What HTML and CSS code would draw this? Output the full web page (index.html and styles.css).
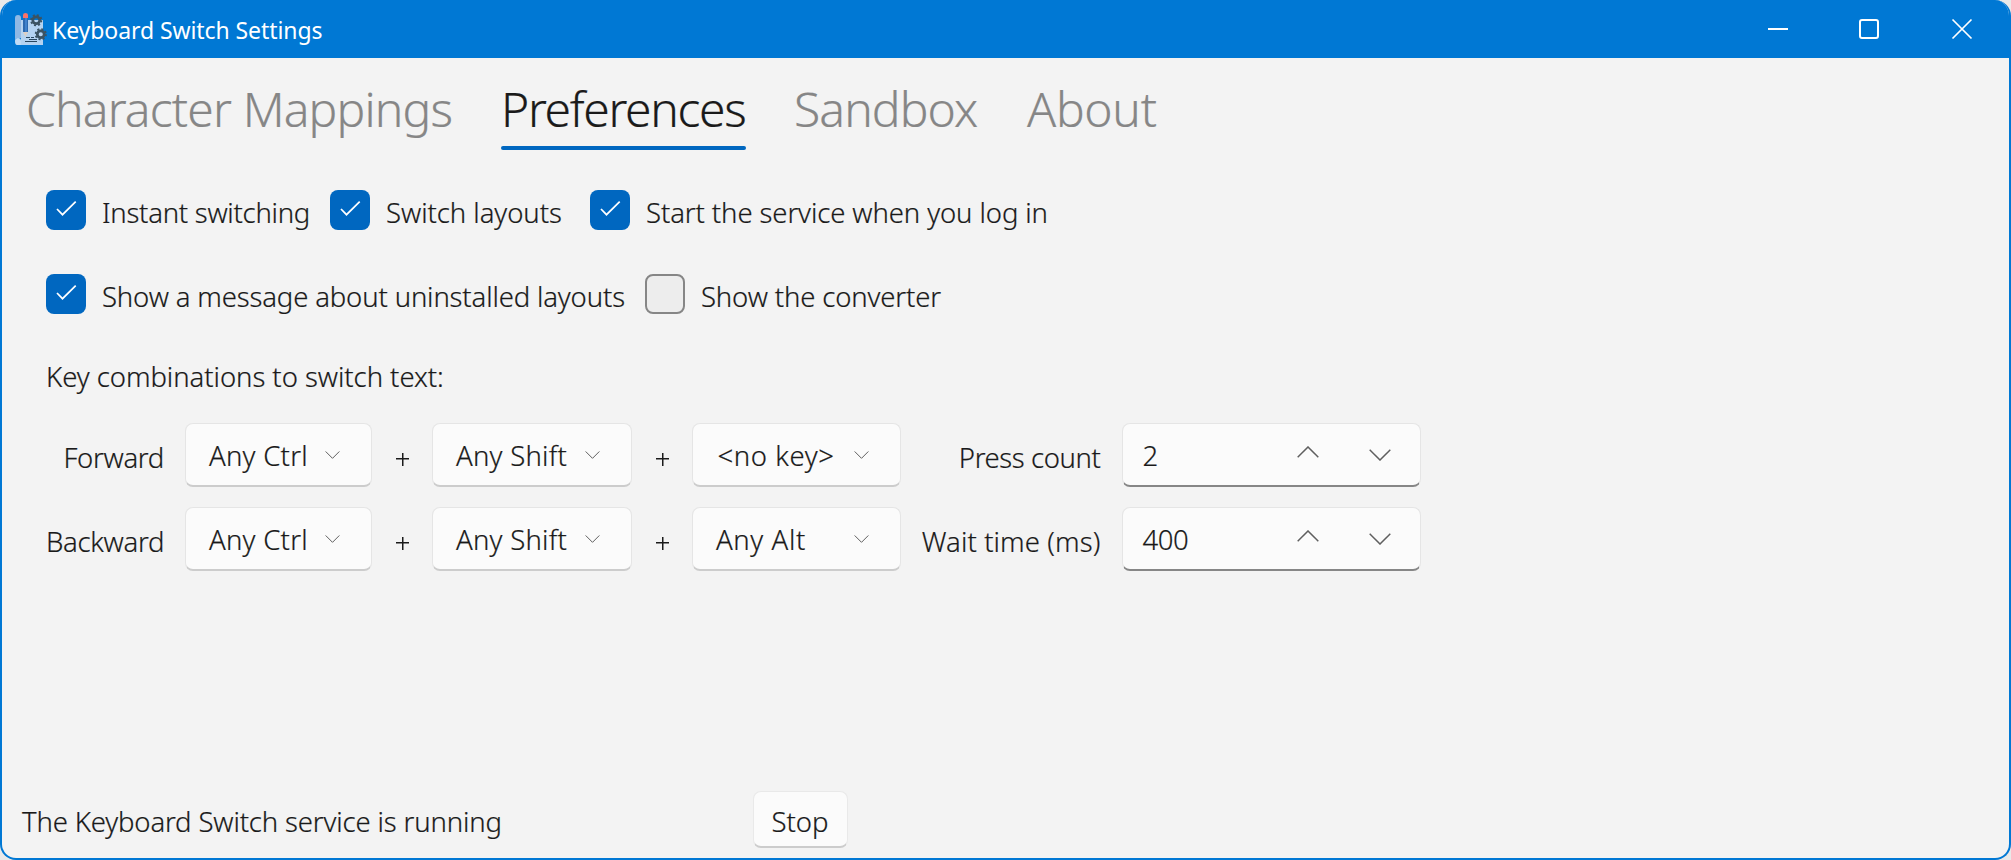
FILE: index.html
```html
<!DOCTYPE html>
<html lang="en">
<head>
<meta charset="utf-8">
<title>Keyboard Switch Settings</title>
<link rel="stylesheet" href="styles.css">
</head>
<body>
<svg width="0" height="0" class="defs">
  <symbol id="tick" viewBox="0 0 40 40"><path d="M11 19l5.500 5.700L29.700 11.700" fill="none" stroke="#fff" stroke-width="1.7"/></symbol>
  <symbol id="down" viewBox="0 0 22 12"><path d="M.7.7L11 11 21.300.7" fill="none" stroke="#5f5f5f" stroke-width="1.5"/></symbol>
  <symbol id="up" viewBox="0 0 22 12"><path d="M.7 11.300L11 1l10.300 10.300" fill="none" stroke="#5f5f5f" stroke-width="1.5"/></symbol>
  <symbol id="gear" viewBox="-6 -6 12 12"><circle r="3.300" fill="none" stroke="#3b5362" stroke-width="2.600"/><circle r="5" fill="none" stroke="#3b5362" stroke-width="1.800" stroke-dasharray="1.960 1.960"/></symbol>
</svg>
<div class="window">
  <header class="titlebar">
    <svg class="app-icon" viewBox="0 0 32 32">
      <path d="M6 7h22v25H6z" fill="#b4d3f1"/>
      <path d="M0 5q0-3 3-3t3 3v20H3q-3 0-3 3z" fill="#8fb8e4"/>
      <path d="M0 28q0-3 3-3t3 3v4H2q-2 0-2-4z" fill="#c0dbf5"/>
      <path d="M8 5h5v14H8z" fill="#2b69b0"/><path d="M10 5h2v14h-2z" fill="#3f82cc"/>
      <path d="M8 19h5l-2.500 5z" fill="#dccfc4"/>
      <path d="M8 5V2q0-2 2.500-2T13 2v3z" fill="#fb7268"/>
      <path d="M11 24.500h4m1 0h3M10 28.500h12M14 26.500h8" stroke="#29475f" stroke-width="1"/>
      <use href="#gear" x="15" y="1" width="12.500" height="12.500"/>
      <use href="#gear" x="19.500" y="15" width="12.500" height="12.500"/>
    </svg>
    <span class="title">Keyboard Switch Settings</span>
    <div class="controls">
      <svg viewBox="0 0 20 20"><path d="M0 10h20" stroke="#fff" stroke-width="2"/></svg>
      <svg viewBox="0 0 20 20"><rect x="1" y="1" width="18" height="18" rx="2" fill="none" stroke="#fff" stroke-width="2"/></svg>
      <svg viewBox="0 0 20 20"><path d="M.5.5l19 19m0-19l-19 19" stroke="#fff" stroke-width="1.700"/></svg>
    </div>
  </header>
  <nav class="tabs">
    <span class="tab t1">Character Mappings</span>
    <span class="tab t2 active">Preferences</span>
    <span class="tab t3">Sandbox</span>
    <span class="tab t4">About</span>
  </nav>
  <main class="page">
    <div class="checks">
      <label class="check c1"><svg class="box on"><use href="#tick"/></svg><span class="s1">Instant switching</span></label>
      <label class="check c2"><svg class="box on"><use href="#tick"/></svg><span class="s2">Switch layouts</span></label>
      <label class="check"><svg class="box on"><use href="#tick"/></svg><span class="s3">Start the service when you log in</span></label>
    </div>
    <div class="checks">
      <label class="check c4"><svg class="box on"><use href="#tick"/></svg><span class="s4">Show a message about uninstalled layouts</span></label>
      <label class="check"><span class="box"></span><span class="s5">Show the converter</span></label>
    </div>
    <p class="caption">Key combinations to switch text:</p>
    <div class="grid">
      <span class="label s6">Forward</span>
      <div class="select"><span class="s8">Any Ctrl</span><svg class="chev"><use href="#down"/></svg></div>
      <span class="plus"></span>
      <div class="select"><span class="s9">Any Shift</span><svg class="chev"><use href="#down"/></svg></div>
      <span class="plus"></span>
      <div class="select"><span class="s10">&lt;no key&gt;</span><svg class="chev"><use href="#down"/></svg></div>
      <span class="label s12">Press count</span>
      <div class="number"><span>2</span><svg class="step"><use href="#up"/></svg><svg class="step dn"><use href="#down"/></svg></div>
      <span class="label s7">Backward</span>
      <div class="select"><span class="s8">Any Ctrl</span><svg class="chev"><use href="#down"/></svg></div>
      <span class="plus"></span>
      <div class="select"><span class="s9">Any Shift</span><svg class="chev"><use href="#down"/></svg></div>
      <span class="plus"></span>
      <div class="select"><span class="s11">Any Alt</span><svg class="chev"><use href="#down"/></svg></div>
      <span class="label s13">Wait time (ms)</span>
      <div class="number"><span class="s14">400</span><svg class="step"><use href="#up"/></svg><svg class="step dn"><use href="#down"/></svg></div>
    </div>
  </main>
  <footer class="status">
    <span class="message">The Keyboard Switch service is running</span>
    <button class="stop">Stop</button>
  </footer>
</div>
</body>
</html>
```
FILE: styles.css
```css
* { box-sizing: border-box; }
body { margin: 0; background: #e9e9e9; font-family: "Noto Sans", "Open Sans", sans-serif; font-size: 27.500px; font-weight: 300; color: #1a1a1a; -webkit-text-stroke: .2px; }
.defs { position: absolute; }
.window { width: 2011px; height: 860px; display: flex; flex-direction: column; border: 2px solid #0078d4; border-top: 0; border-radius: 16px; background: #f3f3f3; overflow: hidden; white-space: nowrap; }
.titlebar { height: 58px; flex: none; display: flex; align-items: center; background: #0078d4; color: #fff; padding-left: 13px; }
.app-icon { width: 32px; height: 32px; flex: none; }
.title { font-size: 23px; font-weight: 400; margin-left: 5px; line-height: 30px; padding-top: 2px; letter-spacing: -.08px; -webkit-text-stroke: 0; }
.controls { margin-left: auto; display: flex; gap: 72px; padding-right: 37px; }
.controls svg { width: 20px; height: 20px; overflow: visible; }
.controls svg:nth-child(2) { margin: 0 1px 0 -1px; }
.tabs { height: 92px; flex: none; display: flex; padding-left: 24px; font-size: 48px; line-height: 66px; color: #868686; }
.tab { height: 92px; padding-top: 18px; margin-right: 48px; }
.t1 { width: 427px; letter-spacing: -.83px; }
.t2 { width: 245px; letter-spacing: -1.330px; }
.t3 { width: 184px; letter-spacing: -.9px; }
.t4 { letter-spacing: -.3px; padding-left: 1px; }
.active { color: #1a1a1a; position: relative; }
.active::after { content: ""; position: absolute; left: 0; right: 0; bottom: 0; height: 4px; border-radius: 2px; background: #0067c0; }
.page { padding: 40px 0 0 44px; flex: 1; }
.checks { display: flex; height: 40px; margin-bottom: 44px; }
.check { display: flex; }
.check > span:last-child { margin-left: 16px; line-height: 45px; }
.c1 { width: 284px; }
.c2 { width: 260px; }
.c4 { width: 599px; }
.s1 { letter-spacing: -.26px; }
.s2 { letter-spacing: -.05px; }
.s3 { letter-spacing: -.1px; }
.s4 { letter-spacing: -.15px; }
.s5 { letter-spacing: -.14px; }
.s6 { letter-spacing: -.3px; }
.s7 { letter-spacing: -.3px; }
.s8, .s9 { letter-spacing: .25px; }
.s10 { letter-spacing: .6px; padding-left: 1.500px; }
.s11 { letter-spacing: .6px; }
.s12 { letter-spacing: -.4px; }
.s13 { letter-spacing: .1px; }
.s14 { letter-spacing: -.4px; }
.box { width: 40px; height: 40px; border: 2px solid #868686; border-radius: 8px; background: #ededed; flex: none; }
.box.on { border: 0; background: #0067c0; }
.caption { margin: 0; height: 65px; line-height: 38px; letter-spacing: -.05px; }
.grid { display: grid; grid-template-columns: 139px 187px 60px 200px 60px 209px 220.500px 299px; grid-auto-rows: 64px; row-gap: 20px; }
.label { text-align: right; line-height: 70px; padding-right: 21px; }
.select { display: flex; justify-content: space-between; align-items: center; padding: 0 31px 0 23px; border: 1.500px solid #e5e5e5; border-bottom: 2px solid #cccccc; border-radius: 8px; background: #fbfbfb; }
.select span, .number span { line-height: 60px; padding-top: 2px; }
.chev { width: 15px; height: 8px; }
.plus { place-self: center; width: 13px; height: 13px; margin-top: 8px; margin-left: 1px; background: linear-gradient(#1a1a1a, #1a1a1a) center / 13px 1.500px no-repeat, linear-gradient(#1a1a1a, #1a1a1a) center / 1.500px 13px no-repeat; }
.number { display: flex; align-items: center; padding: 0 29px 0 20px; border: 1.500px solid #e5e5e5; border-bottom: 2px solid #868686; border-radius: 8px; background: #fbfbfb; }
.number span { flex: 1; }
.step { width: 22px; height: 12px; margin-bottom: 5px; }
.dn { margin: 0 0 0 50px; }
.status { height: 69px; display: flex; padding-left: 20px; }
.message { width: 730.500px; line-height: 65px; letter-spacing: -.15px; }
.stop { width: 95px; height: 57px; margin-top: 2px; padding: 4px 0 0; font: inherit; color: inherit; border: 1.500px solid #e9e9e9; border-bottom: 2px solid #cccccc; border-radius: 8px; background: #fbfbfb; }
```
